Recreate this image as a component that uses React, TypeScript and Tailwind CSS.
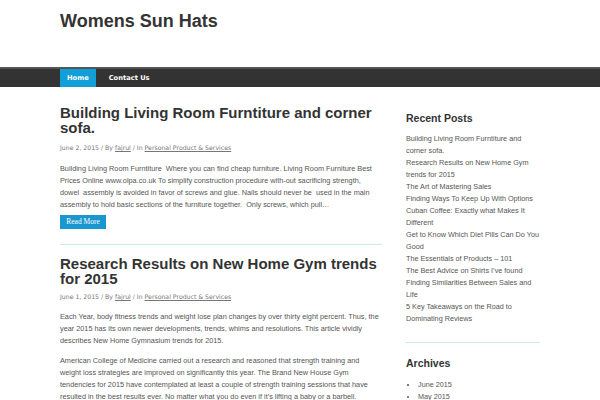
const recent = [
  "Building Living Room Furntiture and corner sofa.",
  "Research Results on New Home Gym trends for 2015",
  "The Art of Mastering Sales",
  "Finding Ways To Keep Up With Options",
  "Cuban Coffee: Exactly what Makes It Different",
  "Get to Know Which Diet Pills Can Do You Good",
  "The Essentials of Products – 101",
  "The Best Advice on Shirts I’ve found",
  "Finding Similarities Between Sales and Life",
  "5 Key Takeaways on the Road to Dominating Reviews",
];

function Meta({ date, tight }: { date: string; tight?: boolean }) {
  return (
    <p
      className={
        tight
          ? "mt-[6px] text-[6.2px] leading-[10px] text-[#777] font-['DejaVu_Sans',sans-serif]"
          : "mt-[8px] text-[6.2px] leading-[10px] text-[#777] font-['DejaVu_Sans',sans-serif]"
      }
    >
      {date} / By <a className="underline">fajrul</a> / In{" "}
      <a className="underline">Personal Product &amp; Services</a>
    </p>
  );
}

export default function App() {
  return (
    <div className="w-[600px] h-[400px] overflow-hidden bg-white font-['Liberation_Sans',Arial,sans-serif]">
      {/* Header */}
      <header className="h-[67px]">
        <div className="w-[480px] mx-auto pt-[10px]">
          <h1 className="text-[18px] leading-[22px] font-bold text-[#333]">Womens Sun Hats</h1>
        </div>
      </header>

      {/* Nav */}
      <nav className="bg-[#333] border-t-2 border-[#555] h-[20px]">
        <ul className="w-[480px] mx-auto flex gap-[6px] font-['DejaVu_Sans',sans-serif] text-[6.7px] font-bold text-white">
          <li className="bg-[#129fd9] h-[18px] px-[7px] flex items-center">Home</li>
          <li className="h-[18px] px-[7px] flex items-center">Contact Us</li>
        </ul>
      </nav>

      <div className="w-[480px] mx-auto flex pt-[18px]">
        {/* Posts */}
        <main className="w-[322px] shrink-0">
          <article>
            <h2 className="text-[15px] leading-[15px] font-bold text-[#333]">
              Building Living Room Furntiture and corner sofa.
            </h2>
            <Meta date="June 2, 2015" />
            <p className="mt-[10px] text-[7.3px] leading-[12px] text-[#555]">
              Building Living Room Furntiture&nbsp; Where you can find cheap furniture. Living Room Furniture Best
              Prices Online www.olpa.co.uk To simplify construction procedure with-out sacrificing strength,
              dowel&nbsp; assembly is avoided in favor of screws and glue. Nails should never be&nbsp; used in the main
              assembly to hold basic sections of the furniture together.&nbsp; Only screws, which pull…
            </p>
            <button className="mt-[4px] h-[14px] w-[46px] bg-[#1a96d0] text-white text-[7.5px] font-['Liberation_Serif',serif] flex items-center justify-center">
              Read More
            </button>
          </article>

          <div className="mt-[15px] h-px bg-[#cfe9f1]" />

          <article className="pt-[11px]">
            <h2 className="text-[15px] leading-[15px] font-bold text-[#333]">
              Research Results on New Home Gym trends for 2015
            </h2>
            <Meta date="June 1, 2015" tight />
            <p className="mt-[9px] text-[7.3px] leading-[12px] text-[#555]">
              Each Year, body fitness trends and weight lose plan changes by over thirty eight percent. Thus, the
              year 2015 has its own newer developments, trends, whims and resolutions. This article vividly
              describes New Home Gymnasium trends for 2015.
            </p>
            <p className="mt-[8px] text-[7.3px] leading-[12px] text-[#555]">
              American College of Medicine carried out a research and reasoned that strength training and weight
              loss strategies are improved on significantly this year. The Brand New House Gym tendencies for 2015
              have contemplated at least a couple of strength training sessions that have resulted in the best
              results ever. No matter what you do even if it’s lifting a baby or a barbell.
            </p>
          </article>
        </main>

        {/* Sidebar */}
        <aside className="w-[134px] ml-[24px] shrink-0 pt-[6px]">
          <h3 className="text-[10.5px] leading-[14px] font-bold text-[#333]">Recent Posts</h3>
          <ul className="mt-[8px] text-[7.25px] leading-[12px] text-[#555]">
            {recent.map((r) => (
              <li key={r}>{r}</li>
            ))}
          </ul>
          <div className="mt-[17px] h-px bg-[#cfe9f1]" />
          <h3 className="mt-[13px] text-[10.5px] leading-[14px] font-bold text-[#333]">Archives</h3>
          <ul className="mt-[9px] text-[7.25px] leading-[12px] text-[#555] list-disc pl-[12px]">
            <li>June 2015</li>
            <li>May 2015</li>
          </ul>
        </aside>
      </div>
    </div>
  );
}
